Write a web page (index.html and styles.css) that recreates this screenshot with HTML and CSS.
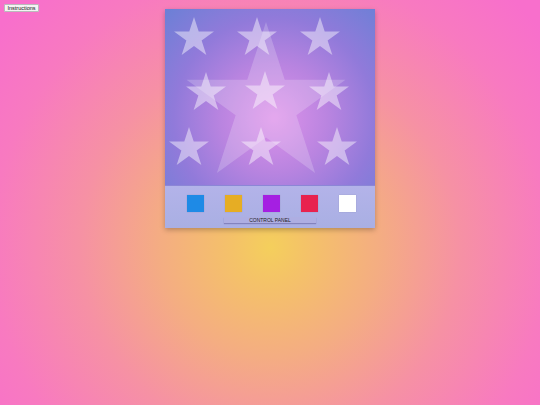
FILE: index.html
```html
<!DOCTYPE html>
<html lang="en">
<head>
    <meta charset="UTF-8">
    <meta name="viewport" content="width=device-width, initial-scale=1.0">
    <title>Star Canvas</title>
    <link rel="stylesheet" href="styles.css">
</head>
<body>
    <button class="instructions">Instructions</button>
    <div class="frame">
        <div class="canvas">
            <svg width="210" height="176" viewBox="0 0 210 176">
                <defs>
                    <polygon id="star" points="0,-21 4.71,-6.49 19.97,-6.49 7.63,2.48 12.34,16.99 0,8.02 -12.34,16.99 -7.63,2.48 -19.97,-6.49 -4.71,-6.49"/>
                </defs>
                <!-- big star in the middle -->
                <use href="#star" class="big-star" transform="translate(101 96.5) scale(3.98)"/>
                <!-- small stars -->
                <use href="#star" class="small-star" x="29" y="29"/>
                <use href="#star" class="small-star" x="92" y="29"/>
                <use href="#star" class="small-star" x="155" y="29"/>
                <use href="#star" class="small-star" x="41" y="84"/>
                <use href="#star" class="small-star" x="100" y="83"/>
                <use href="#star" class="small-star" x="164" y="84"/>
                <use href="#star" class="small-star" x="24" y="139"/>
                <use href="#star" class="small-star" x="96" y="139"/>
                <use href="#star" class="small-star" x="172" y="139"/>
            </svg>
        </div>
        <div class="panel">
            <div class="swatches">
                <span class="swatch blue"></span>
                <span class="swatch orange"></span>
                <span class="swatch purple"></span>
                <span class="swatch red"></span>
                <span class="swatch white"></span>
            </div>
            <div class="panel-label">CONTROL PANEL</div>
        </div>
    </div>
</body>
</html>
```

FILE: styles.css
```css
html, body {
    height: 100%;
}
body {
    margin: 0;
    font-family: "Liberation Sans", Arial, sans-serif;
    background: radial-gradient(circle at 50% 61%, #f4cf5c 0%, #f4c268 10%, #f4ad82 30%, #f691a4 52%, #f87ac0 76%, #f86fcc 95%);
    overflow: hidden;
}
.instructions {
    position: absolute;
    top: 4px;
    left: 4px;
    width: 35px;
    height: 8px;
    padding: 0;
    font-family: "Liberation Sans", Arial, sans-serif;
    font-size: 5.5px;
    line-height: 7px;
    color: #111;
    background: #f4f4f4;
    border: 1px solid #bbb;
    border-radius: 1px;
}
.frame {
    width: 210px;
    margin: 9px auto 0;
    box-shadow: 0 2px 5px rgba(0, 0, 0, 0.25);
}
.canvas {
    height: 176px;
    background: radial-gradient(ellipse at 52% 62%, #de92ea 0%, #b984e0 35%, #917ada 65%, #6b80d6 100%);
}
.canvas svg {
    display: block;
}
.big-star {
    fill: rgba(255, 255, 255, 0.2);
}
.small-star {
    fill: rgba(255, 255, 255, 0.45);
}
.panel {
    height: 43px;
    padding-top: 9px;
    box-sizing: border-box;
    background: linear-gradient(#b3b3e9, #a9afe3);
    border-top: 1px solid #8c86d6;
}
.swatches {
    display: flex;
    justify-content: center;
    gap: 21px;
    padding-left: 3px;
}
.swatch {
    width: 17px;
    height: 17px;
    box-shadow: 0 0 1px rgba(0, 0, 0, 0.2);
}
.blue { background: #1e8ae6; }
.orange { background: #e6ad24; }
.purple { background: #a51fe2; }
.red { background: #e8224f; }
.white { background: #ffffff; }
.panel-label {
    width: 92px;
    height: 6px;
    margin: 5px auto 0;
    font-size: 5px;
    line-height: 6px;
    text-align: center;
    color: #222;
    background: #aeaee2;
    box-shadow: 0 1px 1px rgba(60, 50, 120, 0.35);
}
```
